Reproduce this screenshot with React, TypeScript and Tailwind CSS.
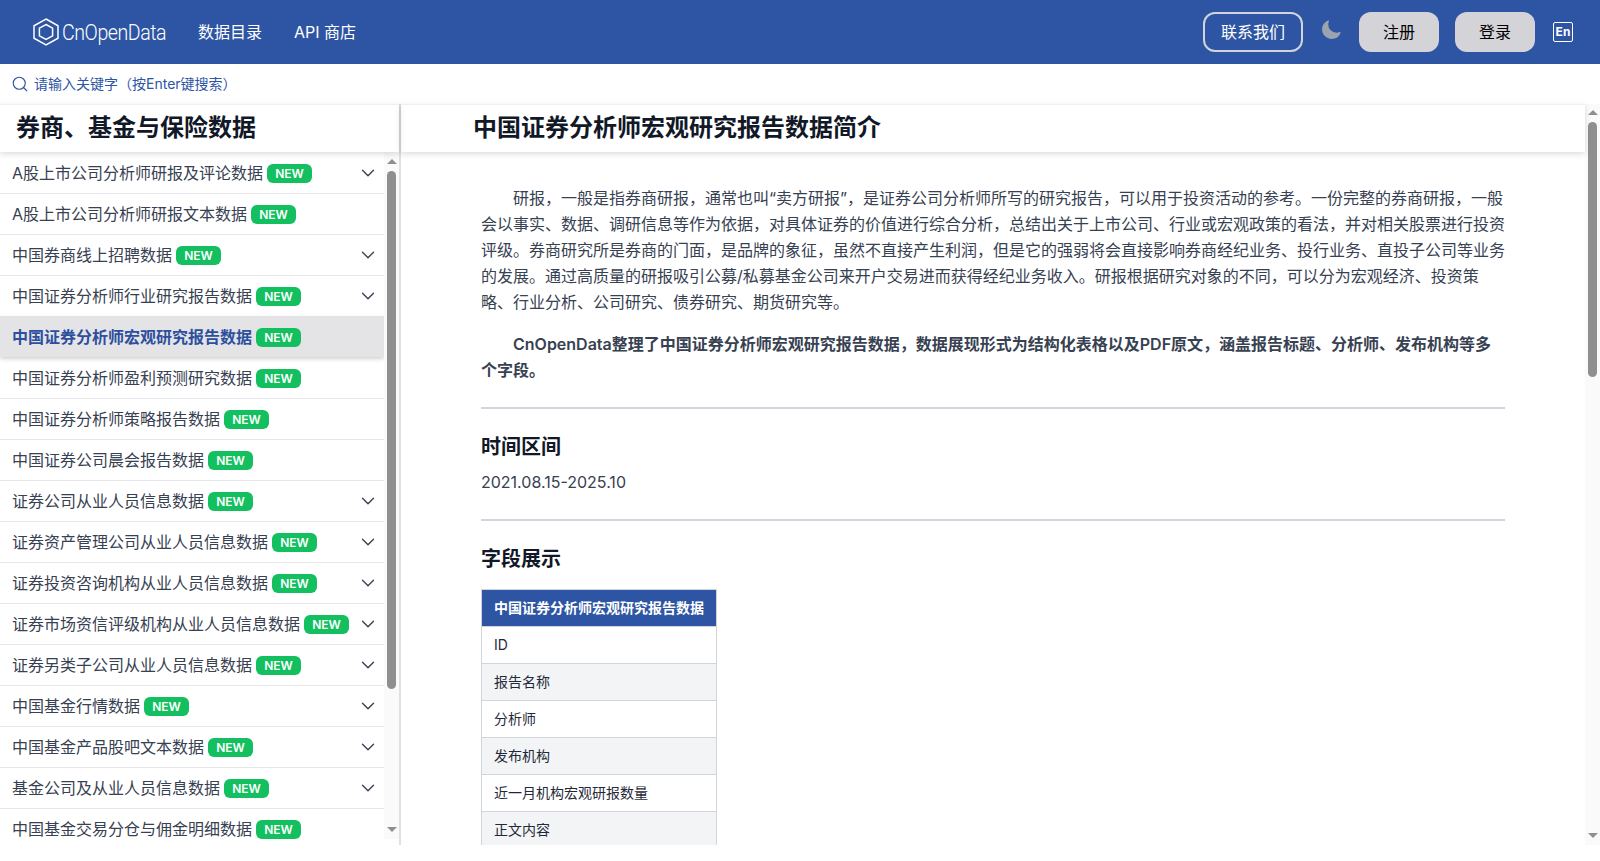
import React from 'react';
import { ChevronDown, Search } from 'lucide-react';

const FONT = "font-['Inter','Noto_Sans_CJK_SC',sans-serif]";

const menuItems = [
  { name: 'A股上市公司分析师研报及评论数据', more: true },
  { name: 'A股上市公司分析师研报文本数据', more: false },
  { name: '中国券商线上招聘数据', more: true },
  { name: '中国证券分析师行业研究报告数据', more: true },
  { name: '中国证券分析师宏观研究报告数据', more: false, active: true },
  { name: '中国证券分析师盈利预测研究数据', more: false },
  { name: '中国证券分析师策略报告数据', more: false },
  { name: '中国证券公司晨会报告数据', more: false },
  { name: '证券公司从业人员信息数据', more: true },
  { name: '证券资产管理公司从业人员信息数据', more: true },
  { name: '证券投资咨询机构从业人员信息数据', more: true },
  { name: '证券市场资信评级机构从业人员信息数据', more: true },
  { name: '证券另类子公司从业人员信息数据', more: true },
  { name: '中国基金行情数据', more: true },
  { name: '中国基金产品股吧文本数据', more: true },
  { name: '基金公司及从业人员信息数据', more: true },
  { name: '中国基金交易分仓与佣金明细数据', more: false },
];

const fields = ['ID', '报告名称', '分析师', '发布机构', '近一月机构宏观研报数量', '正文内容'];

const Scrollbar: React.FC<{ arrowGap: string; thumbGap: string; thumbHeight: string }> = ({ arrowGap, thumbGap, thumbHeight }) => (
  <div className="w-[15px] shrink-0 h-full bg-[#fafafa] flex flex-col items-center">
    <div className={`${arrowGap} w-0 h-0 border-x-[5px] border-x-transparent border-b-[5px] border-b-[#8f8f8f]`} />
    <div className={`${thumbGap} ${thumbHeight} w-[9px] rounded-full bg-[#8f8f8f]`} />
    <div className="flex-1" />
    <div className="w-0 h-0 mb-[7px] border-x-[5px] border-x-transparent border-t-[5px] border-t-[#8f8f8f]" />
  </div>
);

const App: React.FC = () => {
  return (
    <div className={`${FONT} antialiased h-[845px] flex flex-col bg-white text-[#374151] overflow-hidden`}>
      <header className="h-16 shrink-0 bg-[#2d55a3] flex items-center pl-[33px] pr-[27px] text-white">
        <div className="flex items-center w-[165px]">
          <svg width="26" height="28" viewBox="0 0 26 28" fill="none" stroke="#fff" strokeWidth="1.5" className="shrink-0">
            <path d="M13 1 L25 7.8 V20.2 L13 27 L1 20.2 V7.8 Z" />
            <path d="M13 6.5 L19.6 10.2 V17.8 L13 21.5 L6.4 17.8 V10.2 Z" />
          </svg>
          <span className="ml-[3px] origin-left scale-x-[0.89] font-['Roboto',sans-serif] font-light text-[22px] tracking-[-0.5px]">CnOpenData</span>
        </div>
        <nav className="flex items-center gap-8 text-base">
          <span>数据目录</span>
          <span>API 商店</span>
        </nav>
        <div className="flex-1" />
        <button className="w-[100px] h-10 rounded-xl border-2 border-[#d1d5db] text-base">联系我们</button>
        <svg className="ml-[17px] mb-1" width="22" height="22" viewBox="0 0 24 24" fill="#9ca3af">
          <path d="M9.528 1.718a.75.75 0 01.162.819A8.97 8.97 0 009 6a9 9 0 009 9 8.97 8.97 0 003.463-.69.75.75 0 01.981.98 10.503 10.503 0 01-9.694 6.46c-5.799 0-10.5-4.701-10.5-10.5 0-4.368 2.667-8.112 6.46-9.694a.75.75 0 01.818.162z" />
        </svg>
        <button className="ml-[17px] w-20 h-10 rounded-xl bg-[#d4d4d8] text-black text-base">注册</button>
        <button className="ml-4 w-20 h-10 rounded-xl bg-[#d4d4d8] text-black text-base">登录</button>
        <span className="ml-[18px] w-5 h-5 border border-white rounded-[2px] flex items-center justify-center text-xs font-bold leading-none">En</span>
      </header>

      <div className="h-10 shrink-0 flex items-center pl-[11px] text-sm text-[#2d55a3]">
        <Search size={18} strokeWidth={1.5} />
        <span className="ml-[5px]">请输入关键字（按Enter键搜索）</span>
      </div>

      <div className="flex-1 min-h-0 flex shadow-[inset_0_1px_0_#f0f0f0]">
        <aside className="w-[401px] shrink-0 flex flex-col border-r-2 border-[#e0e0e0]">
          <div className="h-12 shrink-0 flex items-center pl-4 text-2xl font-bold text-[#111827] shadow-[0_2px_6px_rgba(0,0,0,0.14)] relative z-10">
            券商、基金与保险数据
          </div>
          <div className="flex-1 min-h-0 flex mb-[6px]">
            <ul className="w-[384px] shrink-0 overflow-hidden pt-px">
              {menuItems.map((item) => (
                <li
                  key={item.name}
                  className={`h-[41px] flex items-center pl-3 pr-[5px] text-base ${
                    item.active
                      ? '-mt-px mb-px pt-px bg-[#e4e4e7] font-semibold text-[#2d4f9e] shadow-[0_2px_4px_rgba(0,0,0,0.18)] relative'
                      : 'border-b border-[#e5e7eb]'
                  }`}
                >
                  <span>{item.name}</span>
                  <span className="ml-1 mt-px w-[45px] h-[19px] rounded-md bg-[#13bf5f] text-white text-xs font-semibold flex items-center justify-center">NEW</span>
                  <span className="flex-1" />
                  {item.more && <ChevronDown size={22} strokeWidth={1.5} className="text-[#374151]" />}
                </li>
              ))}
            </ul>
            <Scrollbar arrowGap="mt-[7px]" thumbGap="mt-[7px]" thumbHeight="h-[518px]" />
          </div>
        </aside>

        <main className="flex-1 min-w-0 flex">
          <div className="flex-1 min-w-0 flex flex-col">
            <div className="h-12 shrink-0 flex items-center pl-[72px] text-2xl font-bold text-[#111827] shadow-[0_2px_6px_rgba(0,0,0,0.14)] relative z-10">
              中国证券分析师宏观研究报告数据简介
            </div>
            <div className="flex-1 min-h-0 overflow-hidden">
              <article className="w-[1024px] mx-auto pt-[33px] text-base leading-[26px]">
                <p className="indent-8 mb-4">
                  研报，一般是指券商研报，通常也叫“卖方研报”，是证券公司分析师所写的研究报告，可以用于投资活动的参考。一份完整的券商研报，一般会以事实、数据、调研信息等作为依据，对具体证券的价值进行综合分析，总结出关于上市公司、行业或宏观政策的看法，并对相关股票进行投资评级。券商研究所是券商的门面，是品牌的象征，虽然不直接产生利润，但是它的强弱将会直接影响券商经纪业务、投行业务、直投子公司等业务的发展。通过高质量的研报吸引公募/私募基金公司来开户交易进而获得经纪业务收入。研报根据研究对象的不同，可以分为宏观经济、投资策略、行业分析、公司研究、债券研究、期货研究等。
                </p>
                <p className="indent-8 font-semibold">
                  CnOpenData整理了中国证券分析师宏观研究报告数据，数据展现形式为结构化表格以及PDF原文，涵盖报告标题、分析师、发布机构等多个字段。
                </p>
                <hr className="my-6 border-t-2 border-[#d1d5db]" />
                <h2 className="text-xl leading-7 font-semibold text-[#111827]">时间区间</h2>
                <p className="mt-2">2021.08.15-2025.10</p>
                <hr className="my-6 border-t-2 border-[#d1d5db]" />
                <h2 className="text-xl leading-7 font-semibold text-[#111827] mb-4">字段展示</h2>
                <table className="border-collapse text-sm leading-5">
                  <thead>
                    <tr>
                      <th className="px-3 py-2 text-left font-semibold text-white bg-[#2d55a3] border border-[#d1d5db]">中国证券分析师宏观研究报告数据</th>
                    </tr>
                  </thead>
                  <tbody>
                    {fields.map((field, i) => (
                      <tr key={field} className={i % 2 === 1 ? 'bg-[#f3f4f6]' : 'bg-white'}>
                        <td className="px-3 py-2 border border-[#d1d5db] text-[#1f2937]">{field}</td>
                      </tr>
                    ))}
                  </tbody>
                </table>
              </article>
            </div>
          </div>
          <Scrollbar arrowGap="mt-[6px]" thumbGap="mt-[7px]" thumbHeight="h-[255px]" />
        </main>
      </div>
    </div>
  );
};

export default App;
